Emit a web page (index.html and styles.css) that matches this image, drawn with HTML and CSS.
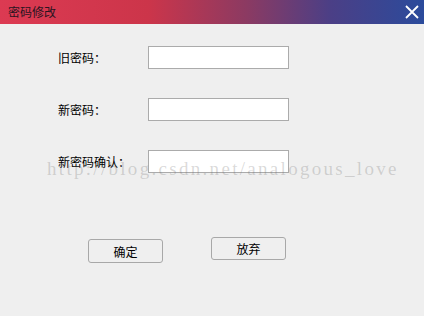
FILE: index.html
```html
<!doctype html>
<html>
  <head>
    <meta charset="UTF-8" />
    <title>密码修改</title>
    <link rel="stylesheet" href="styles.css">
  </head>
  <body>
    <div class="dialog">
      <div class="titlebar">
        <span class="title">密码修改</span>
        <svg class="close" width="14" height="14" viewBox="0 0 14 14">
          <path d="M1 1 L13 13 M13 1 L1 13" stroke="#fff" stroke-width="1.8" fill="none" />
        </svg>
      </div>

      <div class="form">
        <div class="row">
          <label class="label">旧密码：</label>
          <input class="field" type="password" />
        </div>
        <div class="row">
          <label class="label">新密码：</label>
          <input class="field" type="password" />
        </div>
        <div class="row">
          <label class="label">新密码确认：</label>
          <input class="field" type="password" />
        </div>
      </div>

      <div class="buttons">
        <button class="btn btn-ok">确定</button>
        <button class="btn btn-cancel">放弃</button>
      </div>

      <div class="watermark">http://blog.csdn.net/analogous_love</div>
    </div>
  </body>
</html>
```

FILE: styles.css
```css
body {
  margin: 0;
  background-color: #efefef;
  font-family: "Noto Sans CJK SC", "Liberation Sans", sans-serif;
  font-size: 12px;
  color: #000;
}

.dialog {
  position: relative;
  width: 424px;
  height: 316px;
  overflow: hidden;
}

.titlebar {
  height: 24px;
  display: flex;
  align-items: center;
  justify-content: space-between;
  padding: 0 5px 0 8px;
  background: linear-gradient(to right, #dc3a52 0%, #cc354a 35%, #8c3a62 58%, #4b3f86 78%, #2b4b9c 100%);
}

.title {
  color: #2a1420;
  font-size: 12px;
  line-height: 24px;
}

.close {
  display: block;
}

.form {
  padding-top: 22px;
  padding-left: 58px;
}

.row {
  display: flex;
  align-items: center;
  height: 23px;
  margin-bottom: 29px;
}

.row:last-child {
  margin-bottom: 0;
}

.label {
  width: 90px;
}

.field {
  box-sizing: border-box;
  width: 141px;
  height: 23px;
  margin: 0;
  border: 1px solid #ababab;
  background-color: #fff;
  outline: none;
}

.buttons {
  display: flex;
  align-items: flex-start;
  padding-left: 88px;
  padding-top: 64px;
  gap: 48px;
}

.btn {
  box-sizing: border-box;
  width: 75px;
  height: 23px;
  padding: 0;
  font-family: "Noto Sans CJK SC", sans-serif;
  font-size: 12px;
  background-color: #efefef;
  border: 1px solid #a8a8a8;
  border-radius: 3px;
}

.btn-ok {
  margin-top: 2px;
  height: 24px;
}

.watermark {
  position: absolute;
  left: 47px;
  top: 158px;
  font-family: "Liberation Serif", serif;
  font-size: 19px;
  letter-spacing: 2.3px;
  color: rgba(110, 110, 110, 0.26);
  pointer-events: none;
}
```
